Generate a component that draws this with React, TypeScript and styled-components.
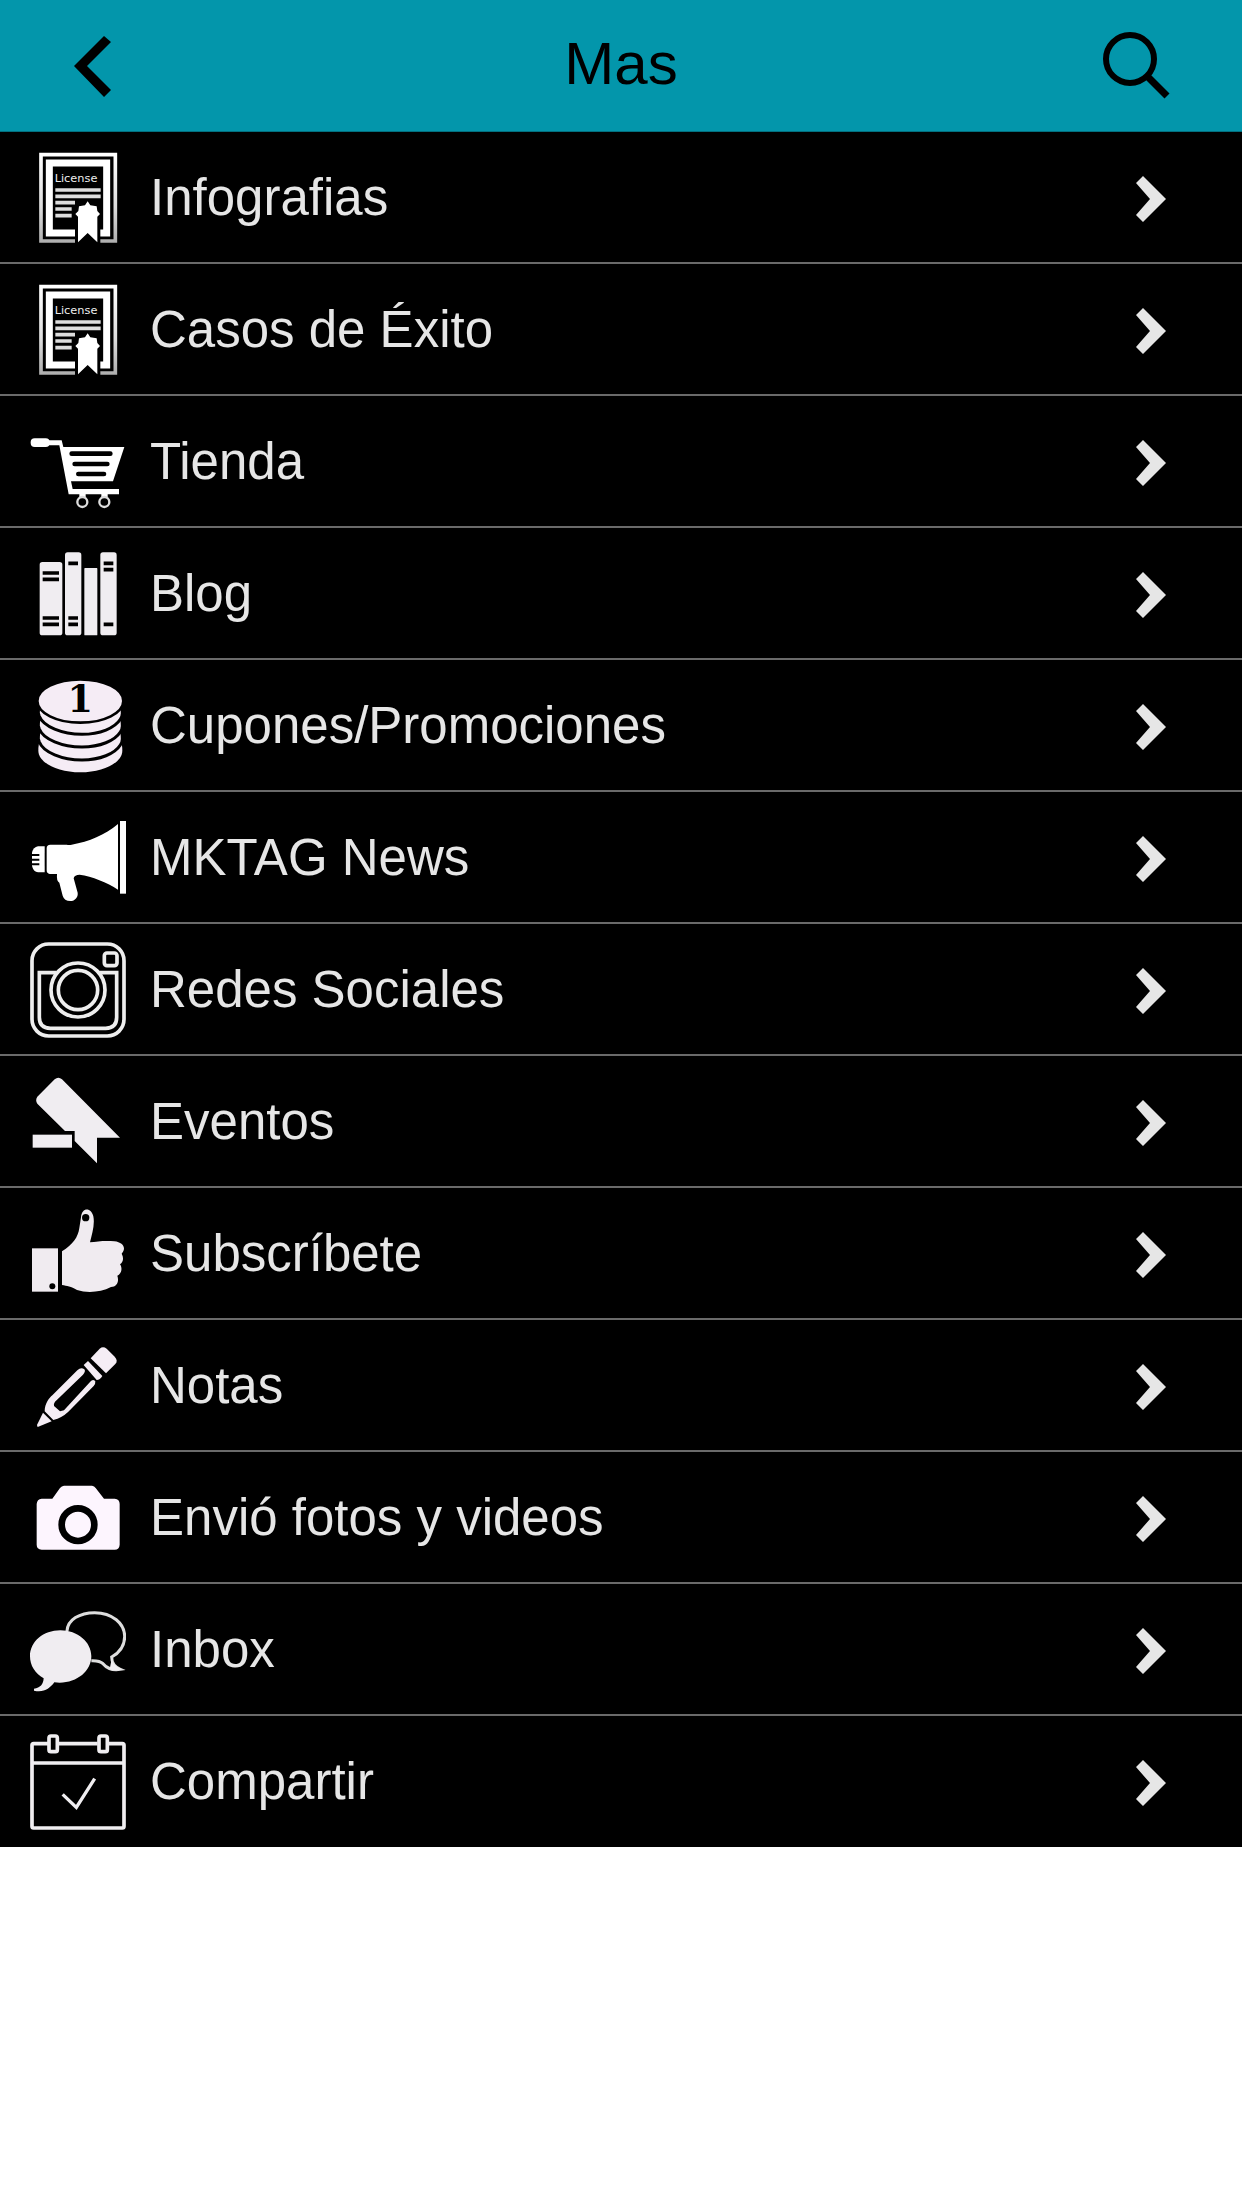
import React from "react";
import styled, { createGlobalStyle } from "styled-components";

const GlobalStyle = createGlobalStyle`
  * { box-sizing: border-box; }
  body { margin: 0; background: #ffffff; }
`;

const Page = styled.div`
  min-height: 100vh;
  background: #ffffff;
  font-family: "Liberation Sans", Arial, Helvetica, sans-serif;
`;

const Header = styled.header`
  display: grid;
  grid-template-columns: 1fr auto 1fr;
  align-items: center;
  height: 132px;
  padding: 0 66px;
  background: #0396ab;
  border-bottom: 1px solid #02707f;
`;

const Title = styled.h1`
  margin: 0;
  padding-bottom: 4px;
  color: #000000;
  font-size: 60px;
  line-height: 68px;
  font-weight: 400;
`;

const BarButton = styled.button<{ $end?: boolean }>`
  display: flex;
  justify-self: ${(p) => (p.$end ? "end" : "start")};
  padding: 0;
  border: 0;
  background: transparent;
  color: #000000;
  cursor: pointer;
`;

const Menu = styled.ul`
  margin: 0;
  padding: 0;
  list-style: none;
  background: #000000;
`;

const MenuItem = styled.li`
  border-bottom: 2px solid #6a6a6a;

  &:last-child { border-bottom: 1px solid #000000; }
`;

const MenuLink = styled.a`
  display: flex;
  align-items: center;
  gap: 24px;
  height: 130px;
  padding: 2px 76px 0 30px;
  color: #e6e6e6;
  text-decoration: none;
`;

const Label = styled.span`
  flex: 1;
  font-size: 51px;
  line-height: 60px;
`;

const Glyph = styled.svg<{ $tint?: string }>`
  flex: none;
  width: 96px;
  height: 96px;
  color: ${(p) => p.$tint || "#ffffff"};
`;

const Arrow = styled.svg`
  flex: none;
  width: 30px;
  height: 48px;
`;

type IconProps = { top: number; tint?: string; children: React.ReactNode };

const Icon = ({ top, tint, children }: IconProps) => (
  <Glyph $tint={tint} viewBox={`90 ${top} 288 288`} fill="currentColor" aria-hidden="true">
    {children}
  </Glyph>
);

const LicenseIcon = () => (
  <Icon top={450}>
    <defs>
      <linearGradient id="frame" x1="0" y1="0" x2="0" y2="1">
        <stop offset="0" stopColor="#ffffff" />
        <stop offset="0.6" stopColor="#dddddd" />
        <stop offset="1" stopColor="#b0b0b0" />
      </linearGradient>
    </defs>
    <path d="M225 723H123V464H346V723H301" fill="none" stroke="url(#frame)" strokeWidth="11" />
    <path d="M225 699H148V489H320V699H301" fill="none" stroke="currentColor" strokeWidth="21" />
    <text x="164" y="546" fontSize="34" fontFamily="'DejaVu Sans', sans-serif" fill="#eeeeee">License</text>
    <path d="M166 570H302M166 589H302M166 608H225M166 627H215M166 647H215" stroke="#dddddd" strokeWidth="11" />
    <path d="M263 604L271 616L290 619L292 633L300 642L292 650V727L263 699L234 727V650L226 642L235 633L237 619L255 616Z" />
  </Icon>
);

const CartIcon = () => (
  <Icon top={462}>
    <rect x="92" y="535" width="57" height="26" rx="12" />
    <path d="M145 541H185L190 561H373L339 664H213L218 687H357V703H206L178 556H145Z" />
    <path d="M215 581H331M224 612H322M235 642H312" stroke="#000000" strokeWidth="14" strokeLinecap="round" />
    <path d="M238 700H257V712H238ZM304 700H323V712H304Z" />
    <circle cx="247" cy="726" r="15" fill="#000000" stroke="#dddddd" strokeWidth="7" />
    <circle cx="313" cy="726" r="15" fill="#000000" stroke="#dddddd" strokeWidth="7" />
  </Icon>
);

const BooksIcon = () => (
  <Icon top={66} tint="#f0edf1">
    <rect x="119" y="114" width="68" height="220" rx="8" />
    <rect x="195" y="85" width="49" height="249" rx="8" />
    <rect x="253" y="132" width="39" height="202" rx="2" />
    <rect x="301" y="85" width="49" height="249" rx="8" />
    <path
      d="M128 147H177M128 166H177M128 282H177M128 301H177M205 118H234M205 282H234M205 301H234M311 118H340M311 137H340M311 301H340"
      stroke="#000000"
      strokeWidth="11"
    />
  </Icon>
);

const CoinsIcon = () => (
  <Icon top={462} tint="#f5ecf5">
    <path d="M115 680Q115 660 120 650L361 650Q367 660 367 680C367 716 309 745 241 745S115 716 115 680Z" />
    {[645, 606, 568].map((y) => (
      <path
        key={y}
        d={`M115 ${y}Q115 ${y - 22} 120 ${y - 28}H361Q367 ${y - 22} 367 ${y}C367 ${y + 6} 365 ${y + 12} 361 ${y + 18}C345 ${y + 44} 300 ${y + 63} 246 ${y + 63}C186 ${y + 63} 130 ${y + 40} 118 ${y + 9}Z`}
        stroke="#000000"
        strokeWidth="9"
      />
    ))}
    <ellipse cx="241" cy="531" rx="129" ry="65" stroke="#000000" strokeWidth="8" />
    <text x="241" y="565" textAnchor="middle" fontSize="110" fontWeight="700" fontFamily="'DejaVu Serif', serif" fill="#000000">1</text>
  </Icon>
);

const MegaphoneIcon = () => (
  <Icon top={66}>
    <rect x="360" y="99" width="18" height="218" />
    <path d="M354 108V305C321 283 276 265 239 260C229 260 222 264 221 271L233 314C235 327 225 339 211 339C199 339 191 333 188 323L178 284Q169 280 171 258H149Q140 257 140 247V181Q140 170 151 170H200Q207 172 215 170C268 161 314 141 354 108Z" />
    <path d="M134 175V253H114Q101 251 97 237L96 232V193Q100 178 114 175Z" />
    <path d="M92 201H118M92 215H118M92 229H118" stroke="#000000" strokeWidth="6" />
  </Icon>
);

const CameraFrameIcon = () => (
  <Icon top={462} tint="#eeeeee">
    <g fill="none" stroke="currentColor" strokeWidth="11">
      <rect x="96" y="468" width="276" height="276" rx="50" />
      <rect x="313" y="495" width="38" height="38" rx="8" />
      <path d="M170 554H118V688Q118 721 151 721H317Q350 721 350 688V554H298" />
      <circle cx="234" cy="606" r="81" />
      <circle cx="234" cy="606" r="59" />
    </g>
  </Icon>
);

const TagIcon = () => (
  <Icon top={60} tint="#f0edf1">
    <rect x="98" y="242" width="118" height="39" />
    <path d="M164 76Q175 67 186 76L360 251H291V328L224 261V231H195L112 149Q105 139 112 128Z" />
  </Icon>
);

const ThumbIcon = () => (
  <Icon top={456} tint="#f0ebf0">
    <rect x="96" y="583" width="78" height="130" />
    <circle cx="157" cy="697" r="9" fill="#000000" />
    <path d="M186 592C219 571 234 550 238 522L243 490C245 459 274 459 280 487C285 511 276 540 270 565C292 562 318 559 343 562C370 565 380 583 365 599C372 611 370 624 360 631C368 642 365 659 352 665C358 683 351 698 333 699C302 715 262 718 231 708C213 697 201 696 186 693Z" />
    <circle cx="257" cy="491" r="11" fill="#000000" />
  </Icon>
);

const PencilIcon = () => (
  <Icon top={60} tint="#f5edf5">
    <path d="M299 92Q309 84 320 92L344 116Q355 128 346 138L318 166L272 121Z" />
    <path d="M251 141L264 129L307 174Q300 186 290 186Z" />
    <path
      fillRule="evenodd"
      d="M232 157Q243 147 253 154Q258 160 249 170L165 251Q160 258 162 264L180 280L192 277L268 194Q278 180 286 190Q287 197 281 204L205 281Q186 299 160 306L134 280C134 257 148 239 157 232Z"
    />
    <path d="M129 284L155 310L113 327Q110 324 112 319Z" />
  </Icon>
);

const PhotoIcon = () => (
  <Icon top={456} tint="#fdf5fe">
    <path d="M192 503H276Q283 504 287 510L312 542H344Q359 543 359 558V680Q358 695 344 695H125Q110 694 110 680V558Q111 543 125 542H157L180 510Q185 504 192 503Z" />
    <circle cx="234" cy="620" r="49" fill="none" stroke="#000000" strokeWidth="20" />
  </Icon>
);

const ChatIcon = () => (
  <Icon top={66} tint="#f0edf1">
    <path
      d="M201 153C203 119 239 98 284 98C337 98 374 131 374 169C374 196 361 217 335 231C335 246 342 260 361 268C337 272 321 265 309 251Q299 241 274 242"
      fill="none"
      stroke="#dddddd"
      strokeWidth="9"
    />
    <path d="M336 232Q334 257 367 268Q347 275 329 268Z" />
    <path d="M181 151C233 151 274 186 274 229C274 277 223 315 163 307C149 326 132 338 102 332V326C121 324 130 313 131 295C105 281 90 256 90 229C90 185 130 151 181 151Z" />
  </Icon>
);

const CalendarIcon = () => (
  <Icon top={462} tint="#f0eef1">
    <g fill="none" stroke="currentColor" strokeWidth="11">
      <path d="M144 491H101Q96 491 96 496V739Q96 744 101 744H367Q372 744 372 739V496Q372 491 367 491H325M293 491H176M96 549H372" />
      <rect x="147" y="468" width="25" height="47" rx="6" />
      <rect x="297" y="468" width="25" height="47" rx="6" />
      <path d="M188 643L229 682L284 596" strokeWidth="10" />
    </g>
  </Icon>
);

const items: { label: string; icon: React.ComponentType }[] = [
  { label: "Infografias", icon: LicenseIcon },
  { label: "Casos de Éxito", icon: LicenseIcon },
  { label: "Tienda", icon: CartIcon },
  { label: "Blog", icon: BooksIcon },
  { label: "Cupones/Promociones", icon: CoinsIcon },
  { label: "MKTAG News", icon: MegaphoneIcon },
  { label: "Redes Sociales", icon: CameraFrameIcon },
  { label: "Eventos", icon: TagIcon },
  { label: "Subscríbete", icon: ThumbIcon },
  { label: "Notas", icon: PencilIcon },
  { label: "Envió fotos y videos", icon: PhotoIcon },
  { label: "Inbox", icon: ChatIcon },
  { label: "Compartir", icon: CalendarIcon },
];

export default function App() {
  return (
    <Page>
      <GlobalStyle />
      <Header>
        <BarButton type="button" aria-label="Atrás">
          <svg width="54" height="64" viewBox="66 33 54 64" aria-hidden="true">
            <path d="M74 65L104 35L111 41L87 65L111 89L104 96Z" fill="currentColor" />
          </svg>
        </BarButton>
        <Title>Mas</Title>
        <BarButton type="button" aria-label="Buscar" $end>
          <svg width="76" height="68" viewBox="1100 32 76 68" fill="none" stroke="currentColor" aria-hidden="true">
            <circle cx="1130" cy="59" r="24" strokeWidth="6" />
            <path d="M1148 77L1167 96" strokeWidth="7" />
          </svg>
        </BarButton>
      </Header>
      <nav aria-label="Mas">
        <Menu>
          {items.map(({ label, icon: ItemIcon }) => (
            <MenuItem key={label}>
              <MenuLink href="#">
                <ItemIcon />
                <Label>{label}</Label>
                <Arrow viewBox="0 0 30 48" aria-hidden="true">
                  <path d="M7 2L30 25L7 48L0 41L14 25L0 9Z" fill="#e6e6e6" />
                </Arrow>
              </MenuLink>
            </MenuItem>
          ))}
        </Menu>
      </nav>
    </Page>
  );
}
